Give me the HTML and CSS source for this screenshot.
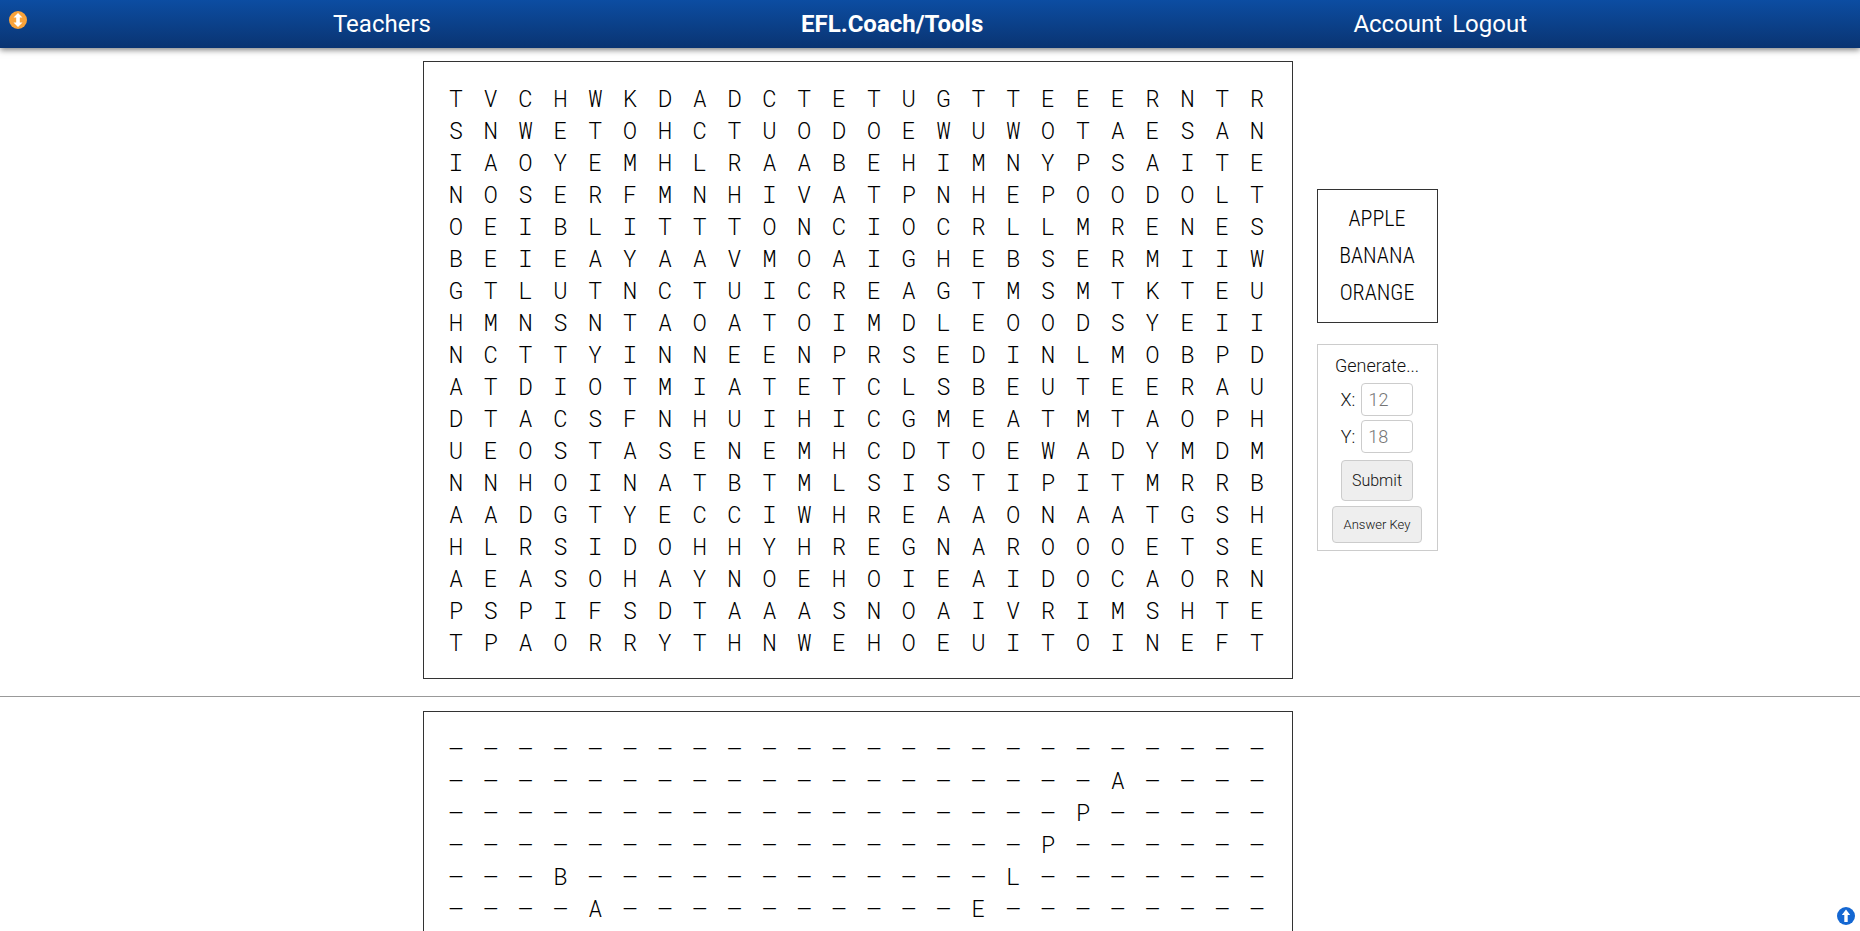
FILE: index.html
```
<!DOCTYPE html>
<html lang="en">
<head>
<meta charset="utf-8">
<title>EFL.Coach/Tools</title>
<link rel="stylesheet" href="styles.css">
</head>
<body>
<header class="topbar">
  <button class="round-button resize" type="button" aria-label="Expand">
    <svg viewBox="0 0 18 18"><circle cx="9" cy="9" r="9" fill="#f9a33a"/><path d="M9 2L13.500 6.500H10.800V11.500H13.500L9 16L4.500 11.500H7.200V6.500H4.500Z" fill="#fff"/></svg>
  </button>
  <nav class="menu">
    <a href="#teachers">Teachers</a>
    <a class="brand" href="#tools">EFL.Coach/Tools</a>
    <span class="account"><a href="#account">Account</a><a href="#logout">Logout</a></span>
  </nav>
</header>
<main>
  <section class="sheet">
    <div class="puzzle" id="puzzle"></div>
    <aside class="side">
      <ul class="words"><li>APPLE</li><li>BANANA</li><li>ORANGE</li></ul>
      <form class="generate">
        <p class="heading">Generate...</p>
        <div class="field"><label for="cols">X:</label><input id="cols" type="text" placeholder="12"></div>
        <div class="field"><label for="rows">Y:</label><input id="rows" type="text" placeholder="18"></div>
        <button class="submit" type="button">Submit</button>
        <button class="key" type="button">Answer Key</button>
      </form>
    </aside>
  </section>
  <hr class="divider">
  <section class="sheet">
    <div class="puzzle" id="answers"></div>
  </section>
</main>
<button class="round-button to-top" type="button" aria-label="Back to top">
  <svg viewBox="0 0 18 18"><circle cx="9" cy="9" r="9" fill="#1467d2"/><path d="M9 2.500L13.200 8H10.700V15H7.300V8H4.800Z" fill="#fff"/></svg>
</button>
<script src="puzzle.js"></script>
</body>
</html>
```
FILE: styles.css
```
* { box-sizing: border-box; }
html { scrollbar-width: none; }
body {
  margin: 0;
  background: #fff;
  color: #111;
  font-family: Roboto, "Liberation Sans", sans-serif;
  font-weight: 300;
}
.topbar {
  position: relative;
  background: linear-gradient(#0c4da2, #0a3472);
  box-shadow: 0 2px 6px rgba(0, 0, 0, 0.5);
}
.menu {
  display: flex;
  justify-content: space-between;
  padding: 0 17.9%;
  font-size: 24px;
  line-height: 48px;
  font-weight: 400;
}
.menu a { color: #fff; text-decoration: none; }
.menu .brand { font-weight: 700; }
.account { display: flex; gap: 10px; }
.round-button {
  width: 18px;
  height: 18px;
  padding: 0;
  border: 0;
  background: none;
}
.round-button svg { display: block; }
.resize { position: absolute; left: 9px; top: 11px; }
.to-top { position: fixed; right: 5px; bottom: 6px; }
.sheet {
  display: grid;
  grid-template-columns: 1fr 121px;
  gap: 24px;
  align-items: center;
  max-width: 1015px;
  margin: 13px auto 17px;
}
.puzzle {
  border: 1px solid #333;
  padding: 20px 17px 20px 15px;
  color: #000;
  font-family: "Roboto Mono", "Liberation Mono", monospace;
  font-size: 24px;
  line-height: 32px;
}
.row {
  display: grid;
  grid-template-columns: repeat(24, 1fr);
  text-align: center;
}
.words {
  list-style: none;
  margin: 0 0 21px;
  padding: 10px 0 11px;
  border: 1px solid #333;
  color: #000;
  text-align: center;
  font-family: "Roboto Condensed", Roboto, sans-serif;
  font-size: 22px;
  line-height: 37px;
}
.generate {
  display: flex;
  flex-direction: column;
  align-items: center;
  border: 1px solid #ccc;
  padding: 9px 0 7px;
}
.heading { margin: 0 0 5px; font-size: 18px; line-height: 24px; }
.field {
  display: flex;
  align-items: center;
  gap: 6px;
  margin-bottom: 4px;
  font-size: 18px;
}
.field input {
  width: 52px;
  height: 33px;
  padding: 0 6px;
  border: 1px solid #ccc;
  border-radius: 4px;
  font: inherit;
}
.field input::placeholder { color: #757575; }
.generate button {
  border: 1px solid #ccc;
  border-radius: 4px;
  background: #eee;
  color: #111;
  font-family: inherit;
}
.generate .submit {
  margin: 3px 0 5px;
  padding: 0 10px;
  font-size: 16px;
  line-height: 39px;
  font-weight: 300;
}
.generate .key {
  padding: 0 11px;
  font-size: 13px;
  line-height: 35px;
  font-weight: 300;
}
.divider { margin: 0; border: 0; border-top: 1px solid #999; }
.divider + .sheet { margin-top: 14px; }
```
FILE: puzzle.js
```
const letters = [
  "TVCHWKDADCTETUGTTEEERNTR",
  "SNWETOHCTUODOEWUWOTAESAN",
  "IAOYEMHLRAABEHIMNYPSAITE",
  "NOSERFMNHIVATPNHEPOODOLT",
  "OEIBLITTTONCIOCRLLMRENES",
  "BEIEAYAAVMOAIGHEBSERMIIW",
  "GTLUTNCTUICREAGTMSMTKTEU",
  "HMNSNTAOATOIMDLEOODSYEII",
  "NCTTYINNEENPRSEDINLMOBPD",
  "ATDIOTMIATETCLSBEUTEERAU",
  "DTACSFNHUIHICGMEATMTAOPH",
  "UEOSTASENEMHCDTOEWADYMDM",
  "NNHOINATBTMLSISTIPITMRRB",
  "AADGTYECCIWHREAAONAATGSH",
  "HLRSIDOHHYHREGNAROOOETSE",
  "AEASOHAYNOEHOIEAIDOCAORN",
  "PSPIFSDTAAASNOAIVRIMSHTE",
  "TPAORRYTHNWEHOEUITOINEFT"
];

// Each answer: word, start row, start column, row step, column step
const answers = [
  ["APPLE", 1, 19, 1, -1],
  ["BANANA", 4, 3, 1, 1],
  ["ORANGE", 14, 17, 0, -1]
];

function draw(id, rows) {
  const box = document.getElementById(id);
  for (const text of rows) {
    const row = document.createElement("div");
    row.className = "row";
    for (const letter of text) {
      const cell = document.createElement("span");
      cell.textContent = letter;
      row.append(cell);
    }
    box.append(row);
  }
}

const solution = letters.map(text => Array(text.length).fill("–"));
for (const [word, row, col, down, across] of answers) {
  [...word].forEach((letter, i) => {
    solution[row + i * down][col + i * across] = letter;
  });
}

draw("puzzle", letters);
draw("answers", solution);
```
